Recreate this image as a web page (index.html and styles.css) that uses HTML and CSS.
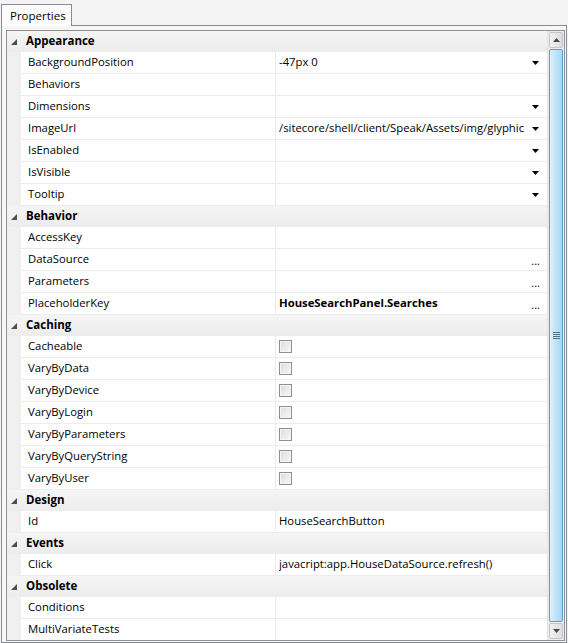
FILE: index.html
```
<!DOCTYPE html>
<html>
<head>
<meta charset="utf-8">
<link rel="stylesheet" href="styles.css">
</head>
<body>
<div class="window">
  <div class="tabstrip">
    <div class="tab">Properties</div>
    <div class="tabfill"></div>
  </div>
  <div class="panel">
    <div class="gridwrap">
      <div class="grid">
        <div class="cat"><span class="gut"><svg class="exp" width="6" height="6" viewBox="0 0 6 6"><polygon points="6,0 6,6 0,6"/></svg></span><span class="catname">Appearance</span></div>
        <div class="row"><span class="gut"></span><span class="name">BackgroundPosition</span><span class="val"><span class="txt">-47px 0</span><svg class="dd" width="7" height="4" viewBox="0 0 7 4"><polygon points="0,0 7,0 3.5,4"/></svg></span></div>
        <div class="row"><span class="gut"></span><span class="name">Behaviors</span><span class="val"><span class="txt"></span></span></div>
        <div class="row"><span class="gut"></span><span class="name">Dimensions</span><span class="val"><span class="txt"></span><svg class="dd" width="7" height="4" viewBox="0 0 7 4"><polygon points="0,0 7,0 3.5,4"/></svg></span></div>
        <div class="row"><span class="gut"></span><span class="name">ImageUrl</span><span class="val"><span class="txt">/sitecore/shell/client/Speak/Assets/img/glyphic</span><svg class="dd" width="7" height="4" viewBox="0 0 7 4"><polygon points="0,0 7,0 3.5,4"/></svg></span></div>
        <div class="row"><span class="gut"></span><span class="name">IsEnabled</span><span class="val"><span class="txt"></span><svg class="dd" width="7" height="4" viewBox="0 0 7 4"><polygon points="0,0 7,0 3.5,4"/></svg></span></div>
        <div class="row"><span class="gut"></span><span class="name">IsVisible</span><span class="val"><span class="txt"></span><svg class="dd" width="7" height="4" viewBox="0 0 7 4"><polygon points="0,0 7,0 3.5,4"/></svg></span></div>
        <div class="row"><span class="gut"></span><span class="name">Tooltip</span><span class="val"><span class="txt"></span><svg class="dd" width="7" height="4" viewBox="0 0 7 4"><polygon points="0,0 7,0 3.5,4"/></svg></span></div>

        <div class="cat"><span class="gut"><svg class="exp" width="6" height="6" viewBox="0 0 6 6"><polygon points="6,0 6,6 0,6"/></svg></span><span class="catname">Behavior</span></div>
        <div class="row"><span class="gut"></span><span class="name">AccessKey</span><span class="val"><span class="txt"></span></span></div>
        <div class="row"><span class="gut"></span><span class="name">DataSource</span><span class="val"><span class="txt"></span><span class="ell">...</span></span></div>
        <div class="row"><span class="gut"></span><span class="name">Parameters</span><span class="val"><span class="txt"></span><span class="ell">...</span></span></div>
        <div class="row"><span class="gut"></span><span class="name">PlaceholderKey</span><span class="val"><span class="txt bold">HouseSearchPanel.Searches</span><span class="ell">...</span></span></div>

        <div class="cat"><span class="gut"><svg class="exp" width="6" height="6" viewBox="0 0 6 6"><polygon points="6,0 6,6 0,6"/></svg></span><span class="catname">Caching</span></div>
        <div class="row"><span class="gut"></span><span class="name">Cacheable</span><span class="val"><span class="chk"></span></span></div>
        <div class="row"><span class="gut"></span><span class="name">VaryByData</span><span class="val"><span class="chk"></span></span></div>
        <div class="row"><span class="gut"></span><span class="name">VaryByDevice</span><span class="val"><span class="chk"></span></span></div>
        <div class="row"><span class="gut"></span><span class="name">VaryByLogin</span><span class="val"><span class="chk"></span></span></div>
        <div class="row"><span class="gut"></span><span class="name">VaryByParameters</span><span class="val"><span class="chk"></span></span></div>
        <div class="row"><span class="gut"></span><span class="name">VaryByQueryString</span><span class="val"><span class="chk"></span></span></div>
        <div class="row"><span class="gut"></span><span class="name">VaryByUser</span><span class="val"><span class="chk"></span></span></div>

        <div class="cat"><span class="gut"><svg class="exp" width="6" height="6" viewBox="0 0 6 6"><polygon points="6,0 6,6 0,6"/></svg></span><span class="catname">Design</span></div>
        <div class="row"><span class="gut"></span><span class="name">Id</span><span class="val"><span class="txt">HouseSearchButton</span></span></div>

        <div class="cat"><span class="gut"><svg class="exp" width="6" height="6" viewBox="0 0 6 6"><polygon points="6,0 6,6 0,6"/></svg></span><span class="catname">Events</span></div>
        <div class="row"><span class="gut"></span><span class="name">Click</span><span class="val"><span class="txt">javacript:app.HouseDataSource.refresh()</span></span></div>

        <div class="cat"><span class="gut"><svg class="exp" width="6" height="6" viewBox="0 0 6 6"><polygon points="6,0 6,6 0,6"/></svg></span><span class="catname">Obsolete</span></div>
        <div class="row"><span class="gut"></span><span class="name">Conditions</span><span class="val"><span class="txt"></span></span></div>
        <div class="row"><span class="gut"></span><span class="name">MultiVariateTests</span><span class="val"><span class="txt"></span></span></div>
      </div>
      <div class="scrollbar">
        <div class="sbtn"><svg width="7" height="4" viewBox="0 0 7 4"><polygon points="0,4 7,4 3.5,0"/></svg></div>
        <div class="thumb"><span class="grip"></span></div>
        <div class="sbtn"><svg width="7" height="4" viewBox="0 0 7 4"><polygon points="0,0 7,0 3.5,4"/></svg></div>
      </div>
    </div>
  </div>
</div>
</body>
</html>
```
FILE: styles.css
```
* { box-sizing: border-box; }
html, body { margin: 0; padding: 0; }
body {
  background: #f3f3f3;
  font-family: "Open Sans", "Noto Sans", sans-serif;
  font-size: 11.3px;
  color: #000;
  width: 568px;
  height: 643px;
  overflow: hidden;
}
.window { padding: 0 1px; }
.tabstrip {
  display: flex;
  align-items: flex-end;
  height: 26px;
}
.tab {
  width: 71px;
  height: 22px;
  border: 1px solid #898c95;
  border-bottom: none;
  background: #fcfcfc;
  padding: 3px 0 0 8px;
  font-size: 11.5px;
  line-height: 16px;
}
.tabfill {
  flex: 1;
  height: 1px;
  background: #898c95;
}
.panel {
  border-left: 1px solid #898c95;
  border-right: 1px solid #898c95;
  border-bottom: 1px solid #898c95;
  background: #f7f7f7;
  padding: 4px 1px 1px 4px;
}
.gridwrap {
  display: flex;
  border: 1px solid #8f9092;
  height: 611px;
  overflow: hidden;
  background: #fff;
}
.grid {
  width: 540px;
  display: flex;
  flex-direction: column;
}
.gut {
  width: 14px;
  flex: none;
  align-self: stretch;
  background: #f0f0f0;
  position: relative;
}
.cat {
  display: flex;
  align-items: center;
  height: 21px;
  flex: none;
  background: linear-gradient(#f5f5f5, #ececec);
}
.cat .gut { background: transparent; }
.exp {
  position: absolute;
  left: 4px;
  top: 8px;
  fill: #4d4d4d;
}
.catname {
  font-weight: bold;
  padding-left: 5px;
  font-size: 11.5px;
  margin-bottom: 2px;
}
.row {
  display: flex;
  height: 22px;
  flex: none;
}
.name {
  width: 255px;
  flex: none;
  border-right: 1px solid #ececec;
  border-bottom: 1px solid #ececec;
  padding-left: 7px;
  line-height: 19px;
  white-space: nowrap;
}
.val {
  flex: 1;
  min-width: 0;
  display: flex;
  align-items: center;
  border-bottom: 1px solid #ececec;
  padding-left: 3px;
  padding-right: 8px;
}
.txt {
  flex: 1;
  min-width: 0;
  overflow: hidden;
  white-space: nowrap;
  line-height: 19px;
  align-self: flex-start;
}
.bold { font-weight: bold; }
.dd { flex: none; fill: #000; margin-left: 2px; }
.ell {
  flex: none;
  font-size: 11px;
  line-height: 11px;
  margin-top: 2px;
  margin-right: -1px;
  color: #000;
}
.chk {
  width: 13px;
  height: 13px;
  border: 1px solid #8f8f8f;
  background: linear-gradient(135deg, #dcdcdc, #f8f8f8);
  box-shadow: inset 0 0 0 1px #f4f4f4;
}
.scrollbar {
  width: 17px;
  flex: none;
  display: flex;
  flex-direction: column;
  background: #ececec;
  padding: 1px;
  border-left: 1px solid #e2e2e2;
}
.sbtn {
  height: 16px;
  flex: none;
  border: 1px solid #c6c6c6;
  border-radius: 2px;
  background: linear-gradient(to right, #f2f2f2, #dcdcdc);
  display: flex;
  align-items: center;
  justify-content: center;
}
.sbtn svg { fill: #4a4a4a; }
.thumb {
  flex: 1;
  margin: 1px 0;
  border: 1px solid #5f9fd0;
  border-radius: 2px;
  background: linear-gradient(to right, #dff1fc, #bfe2f8 50%, #a9d6f4);
  display: flex;
  align-items: center;
  justify-content: center;
}
.grip {
  width: 7px;
  height: 7px;
  background: repeating-linear-gradient(#55708a 0 1px, transparent 1px 2px);
}
```
